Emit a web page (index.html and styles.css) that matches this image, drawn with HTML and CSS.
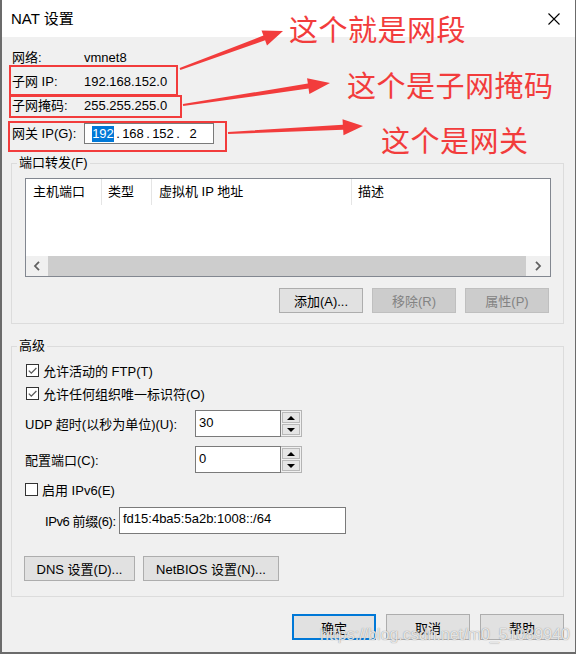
FILE: index.html
```html
<!DOCTYPE html>
<html lang="zh-CN">
<head>
<meta charset="utf-8">
<title>NAT 设置</title>
<link rel="stylesheet" href="styles.css">
</head>
<body>
<div class="window">
  <div class="titlebar">
    <span class="title">NAT 设置</span>
    <svg class="close" width="12" height="12" viewBox="0 0 12 12"><path d="M0.5 0.5L11.5 11.5M11.5 0.5L0.5 11.5" stroke="#000" stroke-width="1.1" fill="none"/></svg>
  </div>
  <div class="content">
    <div class="info">
      <span class="lbl">网络:</span><span class="val">vmnet8</span>
      <span class="lbl">子网 IP:</span><span class="val">192.168.152.0</span>
      <span class="lbl">子网掩码:</span><span class="val">255.255.255.0</span>
      <span class="lbl gw">网关 IP(G):</span>
      <div class="ipbox gw">
        <span class="oct"><span class="sel">192</span></span><span class="dot">.</span><span class="oct">168</span><span class="dot">.</span><span class="oct">152</span><span class="dot">.</span><span class="oct">2</span>
      </div>
    </div>

    <fieldset class="group group-pf">
      <legend>端口转发(F)</legend>
      <div class="listview">
        <div class="lv-header">
          <div class="col c1">主机端口</div>
          <div class="col c2">类型</div>
          <div class="col c3">虚拟机 IP 地址</div>
          <div class="col c4">描述</div>
        </div>
        <div class="lv-body"></div>
        <div class="hscroll">
          <div class="sb-btn sb-left"><svg width="8" height="10" viewBox="0 0 8 10"><path d="M6 0.8L2 5L6 9.2" stroke="#606060" stroke-width="1.8" fill="none"/></svg></div>
          <div class="sb-track"><div class="sb-thumb"></div></div>
          <div class="sb-btn sb-right"><svg width="8" height="10" viewBox="0 0 8 10"><path d="M2 0.8L6 5L2 9.2" stroke="#606060" stroke-width="1.8" fill="none"/></svg></div>
        </div>
      </div>
      <div class="btn-row">
        <div class="btn">添加(A)...</div>
        <div class="btn disabled">移除(R)</div>
        <div class="btn disabled">属性(P)</div>
      </div>
    </fieldset>

    <fieldset class="group group-adv">
      <legend>高级</legend>
      <div class="chk-row r1">
        <span class="chk"><svg width="11" height="11" viewBox="0 0 11 11"><path d="M1.8 5.6L4.3 8.1L9.4 3" stroke="#5a5a5a" stroke-width="1.3" fill="none"/></svg></span>
        <span>允许活动的 FTP(T)</span>
      </div>
      <div class="chk-row r2">
        <span class="chk"><svg width="11" height="11" viewBox="0 0 11 11"><path d="M1.8 5.6L4.3 8.1L9.4 3" stroke="#5a5a5a" stroke-width="1.3" fill="none"/></svg></span>
        <span>允许任何组织唯一标识符(O)</span>
      </div>
      <div class="spin-row s1">
        <span class="spin-lbl">UDP 超时(以秒为单位)(U):</span>
        <div class="spin">
          <div class="spin-input">30</div>
          <div class="spin-btns"><div class="spin-btn"><span class="tri up"></span></div><div class="spin-btn"><span class="tri down"></span></div></div>
        </div>
      </div>
      <div class="spin-row s2">
        <span class="spin-lbl">配置端口(C):</span>
        <div class="spin">
          <div class="spin-input">0</div>
          <div class="spin-btns"><div class="spin-btn"><span class="tri up"></span></div><div class="spin-btn"><span class="tri down"></span></div></div>
        </div>
      </div>
      <div class="chk-row r3">
        <span class="chk"></span>
        <span>启用 IPv6(E)</span>
      </div>
      <div class="prefix-row">
        <span class="prefix-lbl">IPv6 前缀(6):</span>
        <div class="prefix-input">fd15:4ba5:5a2b:1008::/64</div>
      </div>
      <div class="dns-row">
        <div class="btn btn-dns">DNS 设置(D)...</div>
        <div class="btn btn-netbios">NetBIOS 设置(N)...</div>
      </div>
    </fieldset>

    <div class="footer">
      <div class="btn btn-foot default">确定</div>
      <div class="btn btn-foot">取消</div>
      <div class="btn btn-foot">帮助</div>
    </div>
  </div>
</div>

<div class="mark box1"></div>
<div class="mark box2"></div>
<div class="mark box3"></div>
<svg class="arrows" width="576" height="654" viewBox="0 0 576 654">
  <polygon fill="#f23c3c" points="180.35,69.94 265.1,40.27 267,45.4 283,31 261.5,30.4 263.4,35.6 179.65,68.06"/>
  <polygon fill="#f23c3c" points="183.14,105.99 308.55,88.58 309.33,94.02 330,83 307.07,78.18 307.85,83.62 182.86,104.01"/>
  <polygon fill="#f23c3c" points="228.06,134 343.15,129.7 343.47,135.2 363,126 342.53,119.2 342.85,124.7 227.94,132"/>
</svg>
<div class="note n1">这个就是网段</div>
<div class="note n2">这个是子网掩码</div>
<div class="note n3">这个是网关</div>
<div class="watermark">https://blog.csdn.net/m0_51089940</div>
</body>
</html>
```

FILE: styles.css
```css
* { box-sizing: border-box; }
html, body { margin: 0; padding: 0; }
body {
  position: relative;
  width: 576px;
  height: 654px;
  overflow: hidden;
  background: #f0f0f0;
  color: #000;
  font-family: "Liberation Sans", "Noto Sans CJK SC", sans-serif;
  font-size: 13px;
}
.window {
  width: 576px;
  height: 654px;
  background: #f0f0f0;
  border-left: 2px solid #6b6b6b;
  border-right: 1px solid #6b6b6b;
  border-bottom: 2px solid #6b6b6b;
}
.titlebar {
  height: 37px;
  background: #fff;
  display: flex;
  align-items: center;
  justify-content: space-between;
  padding: 0 15px 0 9px;
}
.title { font-size: 15px; line-height: 20px; }
.close { display: block; }

.content { padding: 0 11px 0 9px; }

.info {
  display: grid;
  grid-template-columns: 72px auto;
  grid-template-rows: 18px 18px 18px 23px;
  row-gap: 6px;
  padding: 12px 0 0 1px;
  align-items: center;
  justify-items: start;
  line-height: 18px;
}
.info .gw { align-self: end; height: 21px; display: flex; align-items: center; }
.ipbox {
  width: 130px;
  background: #fff;
  border: 1px solid #7a7a7a;
  padding-left: 5px;
}
.oct { display: inline-block; width: 26px; text-align: center; }
.dot { display: inline-block; width: 4px; text-align: center; }
.sel { display: inline-block; background: #0078d7; color: #fff; line-height: 16px; }

.group {
  margin: 11px 0 0;
  border: 1px solid #dcdcdc;
  padding: 7px 12px 10px 13px;
  min-width: 0;
}
.group legend {
  padding: 0 2px;
  margin-left: -8px;
  line-height: 16px;
  font-size: 13px;
}
.listview {
  height: 99px;
  border: 1px solid #828790;
  background: #fff;
  display: flex;
  flex-direction: column;
}
.lv-header { height: 26px; display: flex; }
.col { height: 26px; line-height: 26px; }
.c1 { width: 76px; padding-left: 7px; border-right: 1px solid #e5e5e5; }
.c2 { width: 50px; padding-left: 6px; border-right: 1px solid #e5e5e5; }
.c3 { width: 200px; padding-left: 7px; border-right: 1px solid #e5e5e5; }
.c4 { flex: 1; padding-left: 6px; }
.lv-body { flex: 1; }
.hscroll { height: 20px; display: flex; background: #f0f0f0; }
.sb-btn { display: flex; align-items: center; justify-content: center; }
.sb-left { width: 22px; }
.sb-right { width: 24px; }
.sb-track { flex: 1; display: flex; }
.sb-thumb { flex: 1; background: #cdcdcd; }

.btn-row {
  margin-top: 11px;
  display: flex;
  justify-content: flex-end;
  gap: 9px;
  padding-right: 2px;
}
.btn {
  height: 25px;
  background: #e1e1e1;
  border: 1px solid #adadad;
  display: flex;
  align-items: center;
  justify-content: center;
  white-space: nowrap;
}
.btn-row .btn { width: 84px; }
.btn.disabled { background: #cccccc; border-color: #bfbfbf; color: #838383; }

.group-adv { margin-top: 14px; padding: 0 12px 15px 13px; }
.chk-row { height: 18px; display: flex; align-items: center; gap: 4px; padding-left: 1px; }
.chk-row.r1 { margin-top: 7px; }
.chk-row.r2 { margin-top: 5px; }
.chk-row.r3 { margin-top: 7px; padding-left: 0; }
.chk {
  width: 13px;
  height: 13px;
  border: 1px solid #333;
  background: #fff;
  display: flex;
  align-items: center;
  justify-content: center;
}
.chk svg { display: block; }

.spin-row { display: flex; align-items: center; height: 27px; }
.spin-row.s1 { margin-top: 8px; }
.spin-row.s2 { margin-top: 9px; }
.spin-lbl { width: 170px; white-space: nowrap; }
.spin { display: flex; height: 27px; }
.spin-input {
  width: 86px;
  height: 27px;
  background: #fff;
  border: 1px solid #7a7a7a;
  padding: 3px 0 0 3px;
  line-height: 18px;
}
.spin-btns {
  width: 21px;
  height: 27px;
  border: 1px solid #b4b4b4;
  border-left: none;
  padding: 1px;
  display: flex;
  flex-direction: column;
  gap: 1px;
}
.spin-btn {
  flex: 1;
  background: #e5e5e5;
  border: 1px solid #b9b9b9;
  display: flex;
  align-items: center;
  justify-content: center;
}
.tri { width: 0; height: 0; border-left: 4px solid transparent; border-right: 4px solid transparent; }
.tri.up { border-bottom: 4px solid #000; }
.tri.down { border-top: 4px solid #000; }

.prefix-row { margin-top: 9px; display: flex; align-items: center; height: 27px; padding-left: 20px; }
.prefix-lbl { width: 74px; flex: none; white-space: nowrap; letter-spacing: -0.4px; }
.prefix-input {
  width: 227px;
  height: 27px;
  background: #fff;
  border: 1px solid #7a7a7a;
  padding: 2px 0 0 3px;
  line-height: 18px;
}
.dns-row { margin-top: 22px; display: flex; gap: 8px; margin-left: -1px; }
.btn-dns { width: 111px; }
.btn-netbios { width: 136px; }

.footer { margin-top: 17px; display: flex; justify-content: flex-end; gap: 10px; }
.btn-foot { width: 84px; height: 26px; }
.btn-foot.default { border: 2px solid #0078d7; }

.mark { position: absolute; border: 2px solid #f23c3c; }
.box1 { left: 9px; top: 65px; width: 169px; height: 31px; }
.box2 { left: 9px; top: 95px; width: 173px; height: 23px; }
.box3 { left: 8px; top: 121px; width: 219px; height: 31px; }
.arrows { position: absolute; left: 0; top: 0; }
.note {
  position: absolute;
  color: #f23c3c;
  font-family: "Noto Sans CJK SC", sans-serif;
  font-size: 29px;
  line-height: 29px;
  letter-spacing: 0.5px;
  white-space: nowrap;
}
.n1 { left: 289px; top: 14px; }
.n2 { left: 347px; top: 70px; }
.n3 { left: 381px; top: 125px; }
.watermark {
  position: absolute;
  left: 320px;
  top: 626px;
  font-family: "Liberation Sans", sans-serif;
  font-size: 16px;
  line-height: 18px;
  color: rgba(255, 255, 255, 0.8);
  text-shadow: 0 0 1px rgba(90, 90, 90, 0.8);
  white-space: nowrap;
}
```
